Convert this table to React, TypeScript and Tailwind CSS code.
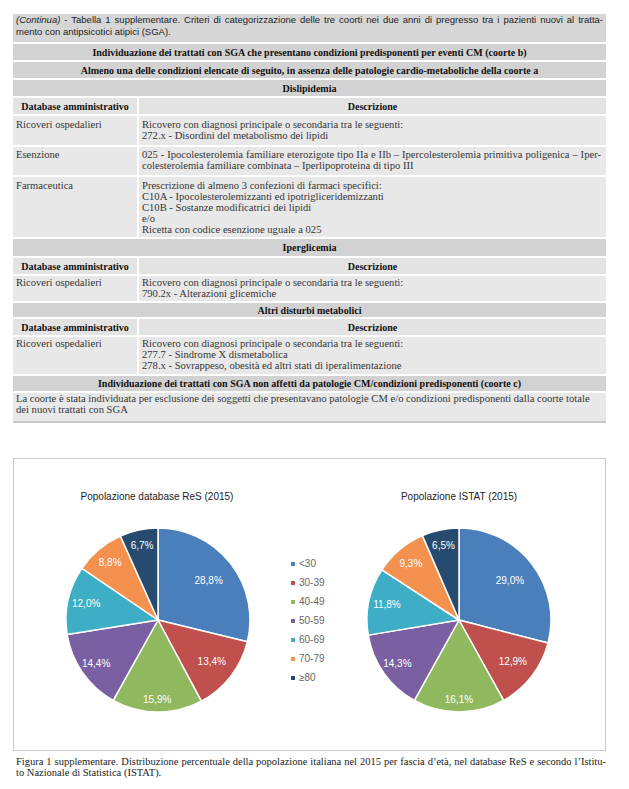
import React from "react";

const COLORS = ["#4a7fbc", "#c0504e", "#90b85f", "#7a5fa3", "#3eadc6", "#f5914f", "#264b6e"];
const LABEL_R = [0.7, 0.74, 0.86, 0.82, 0.8, 0.81, 0.83];
const LEGEND = ["<30", "30-39", "40-49", "50-59", "60-69", "70-79", "≥80"];

function Pie({ values, labels }: { values: number[]; labels: string[] }) {
  const cx = 100;
  const cy = 100;
  const r = 92;
  const total = values.reduce((a, b) => a + b, 0);
  let acc = 0;
  const parts = values.map((v, i) => {
    const a0 = (acc / total) * Math.PI * 2;
    acc += v;
    const a1 = (acc / total) * Math.PI * 2;
    const x0 = cx + r * Math.sin(a0);
    const y0 = cy - r * Math.cos(a0);
    const x1 = cx + r * Math.sin(a1);
    const y1 = cy - r * Math.cos(a1);
    const large = a1 - a0 > Math.PI ? 1 : 0;
    const mid = (a0 + a1) / 2;
    const lr = r * LABEL_R[i];
    return {
      d: `M ${cx} ${cy} L ${x0} ${y0} A ${r} ${r} 0 ${large} 1 ${x1} ${y1} Z`,
      lx: cx + lr * Math.sin(mid),
      ly: cy - lr * Math.cos(mid),
      color: COLORS[i],
      label: labels[i],
    };
  });
  return (
    <svg width={200} height={200} viewBox="0 0 200 200">
      {parts.map((p, i) => (
        <path key={i} d={p.d} fill={p.color} stroke="#ffffff" strokeWidth={1.5} strokeLinejoin="round" />
      ))}
      {parts.map((p, i) => (
        <text
          key={"t" + i}
          x={p.lx}
          y={p.ly}
          fill="#ffffff"
          fontSize={10}
          fontFamily="'Liberation Sans', Arial, sans-serif"
          textAnchor="middle"
          dominantBaseline="central"
        >
          {p.label}
        </text>
      ))}
    </svg>
  );
}

function FullRow({ children, h, bg = "bg-[#d2d2d2]" }: { children: React.ReactNode; h: string; bg?: string }) {
  return (
    <div className={`${h} ${bg} flex items-center justify-center font-bold text-[#111] text-[10px] leading-[11px]`}>
      {children}
    </div>
  );
}

function SubHeader() {
  return (
    <div className="grid grid-cols-[124px_1fr] gap-x-[2px] h-[16px] font-bold text-[#111] text-[10px] leading-[11px]">
      <div className="bg-[#e3e3e3] flex items-center justify-center">Database amministrativo</div>
      <div className="bg-[#e3e3e3] flex items-center justify-center">Descrizione</div>
    </div>
  );
}

function DataRow({
  h,
  pt,
  left,
  children,
}: {
  h: string;
  pt: string;
  left: string;
  children: React.ReactNode;
}) {
  return (
    <div className={`grid grid-cols-[124px_1fr] gap-x-[2px] ${h} text-[#363636] text-[10.6px] leading-[11px]`}>
      <div className={`bg-[#e8e8e8] pl-[3px] ${pt}`}>{left}</div>
      <div className={`bg-[#e8e8e8] pl-[3px] pr-[5px] ${pt}`}>{children}</div>
    </div>
  );
}

const JL = "text-justify [text-align-last:justify] whitespace-nowrap";

export default function App() {
  return (
    <div className="w-[629px] h-[789px] bg-white overflow-hidden">
      <div className="pt-[14px] pl-[13px]">
        <div className="w-[593px] flex flex-col gap-y-[2px] font-['Liberation_Serif',serif]">
          <div className="h-[28px] bg-[#d6d6d6] px-[3px] pt-[0px] font-['Liberation_Sans',Arial,sans-serif] text-[9.5px] leading-[11.5px] text-[#222]">
            <div className={JL}>
              <span className="italic">(Continua)</span> - Tabella 1 supplementare. Criteri di categorizzazione delle tre coorti nei due anni di pregresso tra i pazienti nuovi al tratta-
            </div>
            <div>mento con antipsicotici atipici (SGA).</div>
          </div>
          <FullRow h="h-[16px]">
            Individuazione dei trattati con SGA che presentano condizioni predisponenti per eventi CM (coorte b)
          </FullRow>
          <FullRow h="h-[16px]">
            Almeno una delle condizioni elencate di seguito, in assenza delle patologie cardio-metaboliche della coorte a
          </FullRow>
          <FullRow h="h-[16px]">Dislipidemia</FullRow>
          <SubHeader />
          <DataRow h="h-[29px]" pt="pt-[3px]" left="Ricoveri ospedalieri">
            <div>Ricovero con diagnosi principale o secondaria tra le seguenti:</div>
            <div>272.x - Disordini del metabolismo dei lipidi</div>
          </DataRow>
          <DataRow h="h-[28px]" pt="pt-[2px]" left="Esenzione">
            <div className={JL}>
              025 - Ipocolesterolemia familiare eterozigote tipo IIa e IIb – Ipercolesterolemia primitiva poligenica – Iper-
            </div>
            <div>colesterolemia familiare combinata – Iperlipoproteina di tipo III</div>
          </DataRow>
          <DataRow h="h-[60px]" pt="pt-[3px]" left="Farmaceutica">
            <div>Prescrizione di almeno 3 confezioni di farmaci specifici:</div>
            <div>C10A - Ipocolesterolemizzanti ed ipotrigliceridemizzanti</div>
            <div>C10B - Sostanze modificatrici dei lipidi</div>
            <div>e/o</div>
            <div>Ricetta con codice esenzione uguale a 025</div>
          </DataRow>
          <FullRow h="h-[17px]">Iperglicemia</FullRow>
          <SubHeader />
          <DataRow h="h-[25px]" pt="pt-[1px]" left="Ricoveri ospedalieri">
            <div>Ricovero con diagnosi principale o secondaria tra le seguenti:</div>
            <div>790.2x - Alterazioni glicemiche</div>
          </DataRow>
          <FullRow h="h-[14px]">Altri disturbi metabolici</FullRow>
          <SubHeader />
          <DataRow h="h-[37px]" pt="pt-[1px]" left="Ricoveri ospedalieri">
            <div>Ricovero con diagnosi principale o secondaria tra le seguenti:</div>
            <div>277.7 - Sindrome X dismetabolica</div>
            <div>278.x - Sovrappeso, obesità ed altri stati di iperalimentazione</div>
          </DataRow>
          <FullRow h="h-[15px]">
            Individuazione dei trattati con SGA non affetti da patologie CM/condizioni predisponenti (coorte c)
          </FullRow>
          <div className="h-[30px] bg-[#e8e8e8] border-b-2 border-[#c9c9c9] pl-[3px] pt-[0px] text-[#363636] text-[10.6px] leading-[11px]">
            <div>
              La coorte è stata individuata per esclusione dei soggetti che presentavano patologie CM e/o condizioni predisponenti dalla coorte totale
            </div>
            <div>dei nuovi trattati con SGA</div>
          </div>
        </div>
      </div>

      <div className="mt-[35px] ml-[13px] w-[593px] h-[293px] border border-[#c9c9c9] bg-white pt-[32px] pl-[44px] flex flex-row items-start font-['Liberation_Sans',Arial,sans-serif]">
        <div className="w-[200px] flex flex-col items-center">
          <div className="h-[12px] text-[10px] leading-[12px] text-[#222] -ml-[2px]">Popolazione database ReS (2015)</div>
          <div className="mt-[17px]">
            <Pie values={[28.8, 13.4, 15.9, 14.4, 12.0, 8.8, 6.7]} labels={["28,8%", "13,4%", "15,9%", "14,4%", "12,0%", "8,8%", "6,7%"]} />
          </div>
        </div>
        <div className="ml-[33px] mt-[67px] w-[60px] flex flex-col gap-y-[7px]">
          {LEGEND.map((l, i) => (
            <div key={l} className="h-[12px] flex items-center gap-x-[4px] text-[10px] leading-[12px] text-[#666]">
              <span className="w-[4px] h-[4px] inline-block" style={{ backgroundColor: COLORS[i] }} />
              <span>{l}</span>
            </div>
          ))}
        </div>
        <div className="ml-[8px] w-[200px] flex flex-col items-center">
          <div className="h-[12px] text-[10px] leading-[12px] text-[#222]">Popolazione ISTAT (2015)</div>
          <div className="mt-[17px]">
            <Pie values={[29.0, 12.9, 16.1, 14.3, 11.8, 9.3, 6.5]} labels={["29,0%", "12,9%", "16,1%", "14,3%", "11,8%", "9,3%", "6,5%"]} />
          </div>
        </div>
      </div>

      <div className="mt-[5px] ml-[16px] w-[590px] font-['Liberation_Serif',serif] text-[10.5px] leading-[11px] text-[#222]">
        <div className={JL}>
          Figura 1 supplementare. Distribuzione percentuale della popolazione italiana nel 2015 per fascia d’età, nel database ReS e secondo l’Istitu-
        </div>
        <div>to Nazionale di Statistica (ISTAT).</div>
      </div>
    </div>
  );
}
